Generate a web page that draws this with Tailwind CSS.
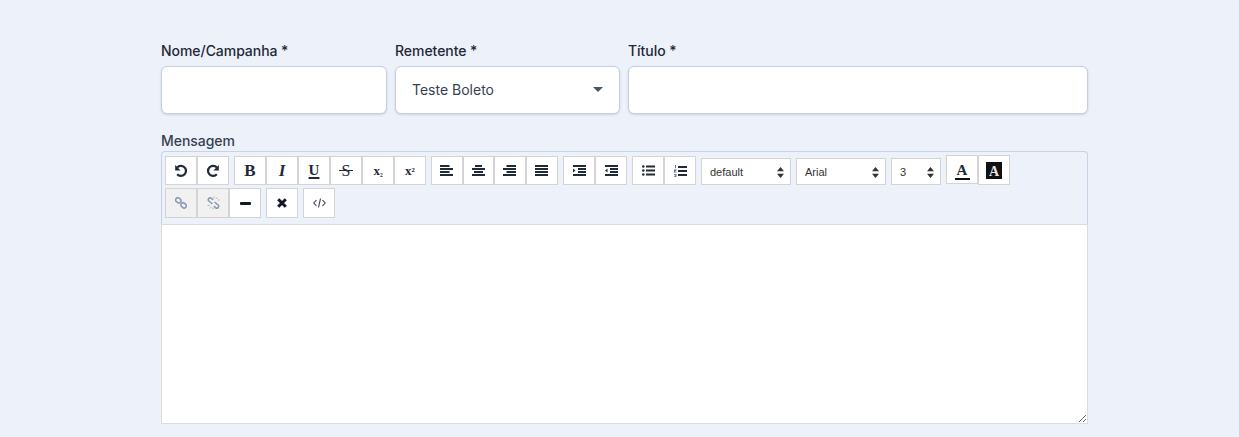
<!DOCTYPE html>
<html lang="pt">
<head>
<meta charset="utf-8">
<title>Campanha</title>
<script src="https://cdn.jsdelivr.net/npm/@tailwindcss/browser@4"></script>
</head>
<body class="h-[437px] overflow-hidden bg-[#edf1f9] font-['Inter',sans-serif]">
<main class="mx-[161px] w-[927px] pt-[41px]">
  <div class="grid grid-cols-[226px_225px_460px] gap-x-2">
    <label class="block">
      <span class="block text-sm font-medium leading-5 tracking-[-0.05px] text-[#1f2937]">Nome/Campanha *</span>
      <input type="text" class="mt-[5px] block h-12 w-full rounded-md border border-[#c5cfdf] bg-white px-4 text-sm shadow-sm">
    </label>
    <label class="block">
      <span class="block text-sm font-medium leading-5 tracking-[-0.05px] text-[#1f2937]">Remetente *</span>
      <span class="relative mt-[5px] flex h-12 w-full items-center rounded-md border border-[#c5cfdf] bg-white pl-4 text-sm text-[#374151] shadow-sm">Teste Boleto
        <svg class="absolute right-4 top-[20px]" width="10" height="5" viewBox="0 0 10 5"><path d="M0 0h10L5 5z" fill="#4b5563"/></svg>
      </span>
    </label>
    <label class="block">
      <span class="block text-sm font-medium leading-5 tracking-[-0.05px] text-[#1f2937]">Título *</span>
      <input type="text" class="mt-[5px] block h-12 w-full rounded-md border border-[#c5cfdf] bg-white px-4 text-sm shadow-sm">
    </label>
  </div>

  <span class="mt-[17px] block text-sm font-medium leading-5 tracking-[-0.05px] text-[#374151]">Mensagem</span>

  <section>
    <div class="flex h-[73px] flex-wrap content-start gap-x-[5px] rounded-t-sm border border-b-0 border-[#c8d2e2] pl-[3px] pr-[70px] pt-1 text-[#0f172a]">
      <div class="flex">
        <button class="flex h-[29px] w-8 items-center justify-center border border-[#d4d4d4] bg-white"><svg width="14" height="14" viewBox="0 0 14 14" fill="none" stroke="#1f2937" stroke-width="2.2"><path d="M3.2 3.6a5 5 0 1 1 0 6.6"/><path d="M1.200 1v5.400h5.400z" fill="#1f2937" stroke="none"/></svg></button>
        <button class="flex h-[29px] w-8 items-center justify-center border border-[#d4d4d4] bg-white"><svg width="14" height="14" viewBox="0 0 14 14" fill="none" stroke="#1f2937" stroke-width="2.2"><path d="M10.8 3.6a5 5 0 1 0 0 6.6"/><path d="M12.800 1v5.400H7.400z" fill="#1f2937" stroke="none"/></svg></button>
      </div>
      <div class="flex font-['Liberation_Serif',serif] text-[17px] text-[#1f2937]">
        <button class="h-[29px] w-8 border border-[#d4d4d4] bg-white font-bold">B</button>
        <button class="h-[29px] w-8 border border-[#d4d4d4] bg-white font-bold italic">I</button>
        <button class="h-[29px] w-8 border border-[#d4d4d4] bg-white text-[15px] font-bold underline decoration-[1.5px] underline-offset-2">U</button>
        <button class="relative h-[29px] w-8 border border-[#d4d4d4] bg-white text-[16px]">S<span class="absolute left-[8px] top-[13px] h-px w-[14px] bg-[#1f2937]"></span></button>
        <button class="h-[29px] w-8 border border-[#d4d4d4] bg-white text-[13px] font-bold">x<span class="text-[9px]">₂</span></button>
        <button class="h-[29px] w-8 border border-[#d4d4d4] bg-white text-[13px] font-bold">x<span class="text-[11px]">²</span></button>
      </div>
      <div class="flex">
        <button class="flex h-[29px] w-8 items-center justify-center border border-[#d4d4d4] bg-white pr-px"><svg width="13" height="11" viewBox="0 0 13 11" fill="#1f2937"><path d="M0 0h9.500v2H0zM0 3h13v2H0zM0 6h9.500v2H0zM0 9h13v2H0z"/></svg></button>
        <button class="flex h-[29px] w-[31px] items-center justify-center border border-[#d4d4d4] bg-white pr-px"><svg width="13" height="11" viewBox="0 0 13 11" fill="#1f2937"><path d="M3 0h7v2H3zM0 3h13v2H0zM2 6h9v2H2zM0 9h13v2H0z"/></svg></button>
        <button class="flex h-[29px] w-8 items-center justify-center border border-[#d4d4d4] bg-white pr-px"><svg width="13" height="11" viewBox="0 0 13 11" fill="#1f2937"><path d="M3.500 0H13v2H3.500zM0 3h13v2H0zM3.500 6H13v2H3.500zM0 9h13v2H0z"/></svg></button>
        <button class="flex h-[29px] w-8 items-center justify-center border border-[#d4d4d4] bg-white pr-px"><svg width="13" height="11" viewBox="0 0 13 11" fill="#1f2937"><path d="M0 0h13v2H0zM0 3h13v2H0zM0 6h13v2H0zM0 9h13v2H0z"/></svg></button>
      </div>
      <div class="flex">
        <button class="flex h-[29px] w-8 items-center justify-center border border-[#d4d4d4] bg-white"><svg width="13" height="11" viewBox="0 0 13 11" fill="#1f2937"><path d="M0 0h13v2H0zM5 3h8v2H5zM5 6h8v2H5zM0 9h13v2H0zM0 3.500L2.500 5.500 0 7.500z"/></svg></button>
        <button class="flex h-[29px] w-8 items-center justify-center border border-[#d4d4d4] bg-white"><svg width="13" height="11" viewBox="0 0 13 11" fill="#1f2937"><path d="M0 0h13v2H0zM5 3h8v2H5zM5 6h8v2H5zM0 9h13v2H0zM2.500 3.500L0 5.500l2.500 2z"/></svg></button>
      </div>
      <div class="flex">
        <button class="flex h-[29px] w-8 items-center justify-center border border-[#d4d4d4] bg-white"><svg width="13" height="11" viewBox="0 0 13 11" fill="#1f2937"><path d="M4 .500h9v2H4zM4 4.500h9v2H4zM4 8.500h9v2H4z"/><circle cx="1.300" cy="1.500" r="1.300"/><circle cx="1.300" cy="5.500" r="1.300"/><circle cx="1.300" cy="9.500" r="1.300"/></svg></button>
        <button class="flex h-[29px] w-8 items-center justify-center border border-[#d4d4d4] bg-white"><svg width="13" height="12" viewBox="0 0 13 12" fill="#1f2937"><path d="M4 1h9v2H4zM4 5h9v2H4zM4 9h9v2H4z"/><path fill="#64748b" d="M1 0h1v3.200H1zM0 4.500h2.500v.8L1 6.800h1.500v.7H0zM0 9h2.500v3H0v-.7h1.700v-.4H.8v-.6h.9v-.6H0z"/></svg></button>
      </div>
      <div class="flex items-start gap-x-[5px] pt-[2px] font-['Liberation_Sans',sans-serif] text-[11px] text-[#333]">
        <span class="relative flex h-[27px] w-[90px] items-center border border-[#d4d4d4] bg-white pl-2 pt-px">default<svg class="absolute right-[6px] top-[8px]" width="7" height="11" viewBox="0 0 7 11" fill="#333"><path d="M3.500 0L7 4.200H0zM3.500 11L0 6.800h7z"/></svg></span>
        <span class="relative flex h-[27px] w-[90px] items-center border border-[#d4d4d4] bg-white pl-2 pt-px">Arial<svg class="absolute right-[6px] top-[8px]" width="7" height="11" viewBox="0 0 7 11" fill="#333"><path d="M3.500 0L7 4.200H0zM3.500 11L0 6.800h7z"/></svg></span>
        <span class="relative flex h-[27px] w-[50px] items-center border border-[#d4d4d4] bg-white pl-2 pt-px">3<svg class="absolute right-[6px] top-[8px]" width="7" height="11" viewBox="0 0 7 11" fill="#333"><path d="M3.500 0L7 4.200H0zM3.500 11L0 6.800h7z"/></svg></span>
      </div>
      <div class="-mt-px flex items-start font-['Liberation_Serif',serif]">
        <button class="flex h-[29px] w-8 flex-col items-center border border-[#d4d4d4] bg-white pt-[7px] text-[15px] font-bold leading-[14px] text-[#1f2937]">A<span class="mt-[1px] block h-[2px] w-[15px] bg-[#111]"></span></button>
        <button class="flex h-[30px] w-8 items-center justify-center border border-[#d4d4d4] bg-white"><span class="flex h-[17px] w-4 items-center justify-center bg-[#111] pt-[3px] text-[14px] font-bold leading-none text-[#e5e5e5]">A</span></button>
      </div>
      <div class="mt-[3px] flex">
        <button class="flex h-[30px] w-8 items-center justify-center border border-[#d4d4d4] bg-[#f1f1f1]"><svg width="12" height="12" viewBox="0 0 12 12" fill="none" stroke="#8c9ab5" stroke-width="1.600"><rect x="-2.800" y="-2.200" width="5.600" height="4.400" rx="2.200" transform="translate(3.300 3.300) rotate(40)"/><rect x="-2.800" y="-2.200" width="5.600" height="4.400" rx="2.200" transform="translate(8.600 8.400) rotate(40)"/></svg></button>
        <button class="flex h-[30px] w-8 items-center justify-center border border-[#d4d4d4] bg-[#f1f1f1]"><svg width="13" height="14" viewBox="0 0 13 14" fill="none" stroke="#8c9ab5" stroke-width="1.300"><path stroke-width="1.600" d="M6 3.800L4.500 2.400a1.800 1.800 0 0 0-2.600 2.600l3.500 3M7 10.200l1.500 1.400a1.800 1.800 0 0 0 2.600-2.600L7.600 6"/><path stroke-width=".7" d="M7 .5v2M10 1.500L9 3M12.500 4H11M.5 9.500H2.500M3 12.500l1-1.500M6 13.500v-2"/></svg></button>
        <button class="flex h-[30px] w-8 items-center justify-center border border-[#d4d4d4] bg-white"><span class="block h-[3px] w-[11px] rounded-[1px] bg-[#111827]"></span></button>
      </div>
      <div class="mt-[3px] flex">
        <button class="flex h-[30px] w-8 items-center justify-center border border-[#d4d4d4] bg-white"><svg width="10" height="10" viewBox="0 0 10 10" stroke="#111827" stroke-width="3"><path d="M1.200 1.200l7.600 7.600M8.800 1.200l-7.600 7.600"/></svg></button>
      </div>
      <div class="mt-[3px] flex">
        <button class="flex h-[30px] w-8 items-center justify-center border border-[#d4d4d4] bg-white"><svg width="13" height="10" viewBox="0 0 13 10" fill="none" stroke="#374151" stroke-width="1.100"><path d="M3.500 2L.8 5l2.700 3M9.500 2l2.700 3-2.700 3M7.500 .5L5.500 9.500"/></svg></button>
      </div>
    </div>
    <textarea aria-label="Mensagem" class="block h-[200px] w-full resize-y border border-[#dcdcdc] bg-white p-2 text-sm"></textarea>
  </section>
</main>
</body>
</html>
